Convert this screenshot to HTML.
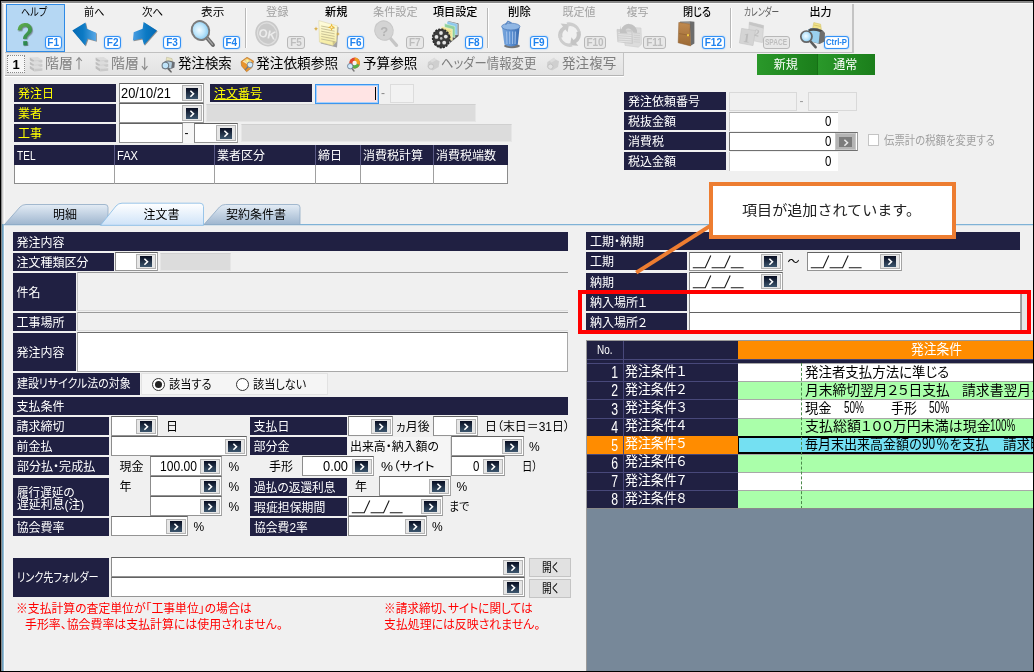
<!DOCTYPE html><html lang="ja"><head><meta charset="utf-8"><title>発注入力</title><style>
*{box-sizing:border-box;margin:0;padding:0}
html,body{width:1034px;height:672px;overflow:hidden;background:#f0f0f0}
#w{position:absolute;left:0;top:0;width:1034px;height:672px;overflow:hidden;will-change:transform;transform:translateZ(0)}
body{position:relative;font-family:"Liberation Sans","Noto Sans CJK JP",sans-serif;font-size:12px;color:#000;font-feature-settings:"palt" 1;line-height:1}
.a{position:absolute}
.lbl{position:absolute;background:#202042;color:#fff;height:18px;line-height:20px;padding-left:4px;white-space:nowrap;font-size:12px;overflow:hidden}
.lbl.y{color:#ffff00}
.inp{position:absolute;background:#fff;border:1px solid #a4a4a4;border-top-color:#626262;border-left-color:#8c8c8c;border-bottom-color:#949494;height:19px}
.dis{position:absolute;background:#dcdcdc;border:1px solid #e6e6e6;border-top-color:#d0d0d0}
.btn{position:absolute;width:20px;height:15px;background:#e6e6e6;border:1px solid #b4b4b4;top:1px}
.btn i{position:absolute;left:2.4px;top:1.2px;width:12.5px;height:10.7px;background:linear-gradient(#070c20,#3c566e)}
.btn svg{position:absolute;left:2.8px;top:2.1px}
.t{position:absolute;white-space:nowrap;line-height:14px}
.f{display:inline-block;white-space:pre;vertical-align:top}
.f>span{display:inline-block;transform-origin:0 0;white-space:pre}
.tb1{position:absolute;top:5.7px;font-size:11px;line-height:13px;white-space:nowrap}
.fk{position:absolute;top:36px;height:13px;border:1px solid #3391f5;border-radius:3px;background:#fff;color:#1e82ee;font-weight:bold;font-size:10px;line-height:11px;text-align:center;box-shadow:0 0 1.5px #6fb4ff,inset 0 0 1px #6fb4ff}
.fk.d{border-color:#b8b8b8;color:#bdbdbd;background:#e8e8e8;box-shadow:none}
.sep{position:absolute;top:8px;width:2px;height:40px;border-left:1px solid #b8b8b8;border-right:1px solid #fff}
.t2{position:absolute;top:55.5px;font-size:13.33px;line-height:16px;white-space:nowrap}
.gr{color:#7e7e7e}
.red{position:absolute;color:#ff0000;font-size:12px;line-height:14px;white-space:pre}
.g{font-size:13.33px;line-height:16px}
</style></head><body><div id="w"><div class="a" style="left:0;top:0;width:1034px;height:672px;border:1px solid #000;border-right-width:1.5px;border-bottom-width:1.5px;z-index:50"></div><div class="a" style="left:1px;top:1px;width:1px;height:670px;background:#8a8a8a"></div><div class="a" style="left:2px;top:224px;width:2px;height:447px;background:linear-gradient(90deg,#5d8fae,#a8cde2)"></div><div class="a" style="left:2px;top:2px;width:2px;height:222px;background:linear-gradient(90deg,#bcbcbc,#f4f4f4)"></div><div class="a" style="left:4px;top:2px;width:1px;height:669px;background:#fafafa"></div><div class="a" style="left:1px;top:1px;width:1032px;height:1.5px;background:#888"></div><div class="a" style="left:2px;top:2.5px;width:1031px;height:1px;background:#fafafa"></div><div class="a" style="left:5px;top:3.5px;width:849px;height:49px;border-right:2px solid #c4c4c4;border-bottom:1px solid #c0c0c0;background:#f0f0f0"></div><div class="a" style="left:5.5px;top:4px;width:59.5px;height:47.5px;background:#b5d7f3;border:1px solid #2e8ae6"></div><div class="tb1" style="left:20.9px;color:#000;"><span class="f" style="width:26.1px"><span style="transform:scaleX(0.8269)">ヘルプ</span></span></div><div class="tb1" style="left:83.8px;color:#000;"><span class="f" style="width:20.5px"><span style="transform:scaleX(0.9246)">前へ</span></span></div><div class="tb1" style="left:142.1px;color:#000;"><span class="f" style="width:21.2px"><span style="transform:scaleX(0.9562)">次へ</span></span></div><div class="tb1" style="left:200.5px;color:#000;"><span class="f" style="width:23.4px"><span style="transform:scaleX(1.0636)">表示</span></span></div><div class="tb1" style="left:265.9px;color:#a2a2a2;"><span class="f" style="width:22.4px"><span style="transform:scaleX(1.0182)">登録</span></span></div><div class="tb1" style="left:325px;color:#000;font-weight:500;"><span class="f" style="width:22.4px"><span style="transform:scaleX(1.0182)">新規</span></span></div><div class="tb1" style="left:372.8px;color:#a2a2a2;"><span class="f" style="width:44.5px"><span style="transform:scaleX(1.0114)">条件設定</span></span></div><div class="tb1" style="left:432.5px;color:#000;font-weight:500;"><span class="f" style="width:44.4px"><span style="transform:scaleX(1.0091)">項目設定</span></span></div><div class="tb1" style="left:507.5px;color:#000;font-weight:500;"><span class="f" style="width:22.8px"><span style="transform:scaleX(1.0364)">削除</span></span></div><div class="tb1" style="left:562.5px;color:#a2a2a2;"><span class="f" style="width:33px"><span style="transform:scaleX(1.0000)">既定値</span></span></div><div class="tb1" style="left:626.5px;color:#a2a2a2;"><span class="f" style="width:22px"><span style="transform:scaleX(1.0000)">複写</span></span></div><div class="tb1" style="left:682.5px;color:#000;font-weight:500;"><span class="f" style="width:28px"><span style="transform:scaleX(0.9185)">閉じる</span></span></div><div class="tb1" style="left:744.1px;color:#5c5c5c;"><span class="f" style="width:35.2px"><span style="transform:scaleX(0.6964)">カレンダー</span></span></div><div class="tb1" style="left:809.5px;color:#000;font-weight:500;"><span class="f" style="width:22px"><span style="transform:scaleX(1.0000)">出力</span></span></div><div class="fk" style="left:44.6px;width:17.2px;">F1</div><div class="fk" style="left:104px;width:17.4px;">F2</div><div class="fk" style="left:163px;width:18px;">F3</div><div class="fk" style="left:222.5px;width:17.5px;">F4</div><div class="fk d" style="left:287.3px;width:17.6px;">F5</div><div class="fk" style="left:346.9px;width:17.6px;">F6</div><div class="fk d" style="left:406px;width:17.5px;">F7</div><div class="fk" style="left:465px;width:17.6px;">F8</div><div class="fk" style="left:529.8px;width:18.1px;">F9</div><div class="fk d" style="left:583.6px;width:22.9px;">F10</div><div class="fk d" style="left:643px;width:23px;">F11</div><div class="fk" style="left:701.8px;width:23.2px;">F12</div><div class="fk d" style="left:762.5px;width:27.5px;font-size:8.5px;"><span class="f" style="width:22px"><span style="transform:scaleX(0.7677)">SPACE</span></span></div><div class="fk" style="left:823.5px;width:25.5px;font-size:8.5px;"><span class="f" style="width:21px"><span style="transform:scaleX(0.9075)">Ctrl-P</span></span></div><div class="sep" style="left:245px"></div><div class="sep" style="left:487px"></div><div class="sep" style="left:730px"></div><svg class="a" style="left:0;top:0;z-index:3" width="860" height="80" viewBox="0 0 860 80"><defs>
<linearGradient id="gq" x1="0" y1="0" x2="0.3" y2="1"><stop offset="0" stop-color="#74b84a"/><stop offset="1" stop-color="#1f8050"/></linearGradient>
<linearGradient id="ga1" x1="0" y1="0" x2="1" y2="0"><stop offset="0" stop-color="#0569b4"/><stop offset="0.45" stop-color="#0c7ac4"/><stop offset="1" stop-color="#5aa8e6"/></linearGradient>
<linearGradient id="ga2" x1="0" y1="0" x2="1" y2="0"><stop offset="0" stop-color="#4a9ee2"/><stop offset="0.55" stop-color="#0c7ac4"/><stop offset="1" stop-color="#0569b4"/></linearGradient>
<radialGradient id="glens" cx="0.45" cy="0.45" r="0.6"><stop offset="0" stop-color="#f2fbff"/><stop offset="0.5" stop-color="#bfe6fb"/><stop offset="1" stop-color="#7cc6f2"/></radialGradient>
<linearGradient id="gtr" x1="0" y1="0" x2="1" y2="0"><stop offset="0" stop-color="#7aa7dc"/><stop offset="0.5" stop-color="#5a8fd2"/><stop offset="1" stop-color="#3a6cb0"/></linearGradient>
<linearGradient id="gdoor" x1="0" y1="0" x2="0" y2="1"><stop offset="0" stop-color="#c08a50"/><stop offset="1" stop-color="#9c6a34"/></linearGradient>
<linearGradient id="gnote" x1="0" y1="0" x2="0" y2="1"><stop offset="0" stop-color="#fffde0"/><stop offset="1" stop-color="#f6eca0"/></linearGradient>
<filter id="sh" x="-20%" y="-20%" width="150%" height="150%"><feGaussianBlur stdDeviation="0.6"/></filter>
</defs><text x="16.8" y="46.3" font-family="Liberation Sans,sans-serif" font-weight="bold" font-size="32" fill="#4a4a4a" opacity="0.55" filter="url(#sh)" transform="translate(2.4 0) rotate(-4 25 35) scale(0.9 1)">?</text><text x="15.8" y="45.3" font-family="Liberation Sans,sans-serif" font-weight="bold" font-size="32" fill="url(#gq)" transform="translate(2.4 0) rotate(-4 25 35) scale(0.9 1)">?</text><path d="M73.3 31.3 L86.2 23.2 L87.6 29.6 L96.9 33.6 L96.9 41.8 L88.4 39.4 L85.9 46.4 Z" fill="#333" opacity="0.5" filter="url(#sh)"/><path d="M72.3 30.5 L85.4 22.4 L86.8 28.8 L96.1 32.8 L96.1 41 L87.6 38.6 L85.1 45.6 Z" fill="url(#ga1)"/><path d="M157.7 31.3 L144.4 22.8 L143.4 29.6 L134.5 33 L133.7 41.2 L143 39.4 L144.9 45.8 Z" fill="#333" opacity="0.5" filter="url(#sh)"/><path d="M156.9 30.5 L143.6 22 L142.6 28.8 L133.7 32.2 L132.9 40.4 L142.2 38.6 L144.1 45 Z" fill="url(#ga2)"/><line x1="207.5" y1="38.5" x2="213" y2="45" stroke="#6a6a6a" stroke-width="3.9" stroke-linecap="round"/><line x1="207.2" y1="38" x2="212.5" y2="44.3" stroke="#a8a8a8" stroke-width="1.2" stroke-linecap="round"/><ellipse cx="200.5" cy="30.5" rx="8.6" ry="9.6" fill="url(#glens)" stroke="#7c7c7c" stroke-width="2" transform="rotate(-25 200.6 30.6)"/><ellipse cx="267.2" cy="33.6" rx="11.8" ry="13" fill="#c9c9c9" transform="rotate(-20 267.2 33.6)"/><ellipse cx="267.2" cy="33.6" rx="9.6" ry="10.8" fill="none" stroke="#dedede" stroke-width="1.2" transform="rotate(-20 267.2 33.6)"/><text x="258.6" y="38" font-family="Liberation Sans,sans-serif" font-weight="bold" font-size="11.5" fill="#ececec" transform="rotate(12 267 34)">OK</text><path d="M320.2 22 L338.6 27.2 L337 47.4 L320.8 43.4 Z" fill="#444" opacity="0.45" filter="url(#sh)"/><path d="M318.8 20.6 L337.4 25.9 L336.4 41.5 L332.8 45.6 L319.4 42.1 Z" fill="url(#gnote)" stroke="#d6cfa0" stroke-width="0.5"/><path d="M336.4 41.5 L332.8 45.6 L332.6 41.2 Z" fill="#cfc58a"/><line x1="321.2" y1="26" x2="334.6" y2="28.6" stroke="#bdb58c" stroke-width="0.8"/><line x1="321.2" y1="28.6" x2="334.6" y2="31.2" stroke="#bdb58c" stroke-width="0.8"/><line x1="321.2" y1="31.2" x2="334.6" y2="33.8" stroke="#bdb58c" stroke-width="0.8"/><line x1="321.2" y1="33.8" x2="334.6" y2="36.4" stroke="#bdb58c" stroke-width="0.8"/><line x1="321.2" y1="36.4" x2="334.6" y2="39" stroke="#bdb58c" stroke-width="0.8"/><line x1="321.2" y1="39" x2="334.6" y2="41.6" stroke="#bdb58c" stroke-width="0.8"/><path d="M331.6 23.6 L332.608 26.192 L335.2 27.2 L332.608 28.208 L331.6 30.8 L330.592 28.208 L328 27.2 L330.592 26.192 Z" fill="#e8b028"/><path d="M331.6 25.6 L332.048 26.752 L333.2 27.2 L332.048 27.648 L331.6 28.8 L331.152 27.648 L330 27.2 L331.152 26.752 Z" fill="#fff4c0"/><path d="M316 26.6 L316.616 28.184 L318.2 28.8 L316.616 29.416 L316 31 L315.384 29.416 L313.8 28.8 L315.384 28.184 Z" fill="#d8a838"/><path d="M338 32 L338.56 33.44 L340 34 L338.56 34.56 L338 36 L337.44 34.56 L336 34 L337.44 33.44 Z" fill="#d8a838"/><line x1="390.5" y1="38.5" x2="396.5" y2="45.3" stroke="#c6c6c6" stroke-width="3.4" stroke-linecap="round"/><ellipse cx="384" cy="30.6" rx="9.2" ry="9.8" fill="#d4d4d4" stroke="#c8c8c8" stroke-width="1" transform="rotate(-25 384 30.6)"/><text x="380.2" y="35.6" font-family="Liberation Sans,sans-serif" font-weight="bold" font-size="13" fill="#b4b4b4">?</text><path d="M448 21 L458.5 23.5 L458.5 36 L450 43 Z" fill="#333" opacity="0.8"/><path d="M447 21.2 L457.4 24 L457.4 35 L447 32.4 Z" fill="#8cc8ee" stroke="#e8f4fc" stroke-width="0.5"/><path d="M444.6 23.6 L455 26.4 L455 37.6 L444.6 35 Z" fill="#8fd09c" stroke="#e4f6e6" stroke-width="0.5"/><path d="M441.6 26.4 L452.4 29.2 L452.4 40.6 L441.6 38 Z" fill="#f4e79a" stroke="#fbf6d8" stroke-width="0.5"/><line x1="443" y1="29.6" x2="451" y2="31.6" stroke="#d2c678" stroke-width="0.6"/><line x1="443" y1="32" x2="451" y2="34" stroke="#d2c678" stroke-width="0.6"/><line x1="443" y1="34.4" x2="451" y2="36.4" stroke="#d2c678" stroke-width="0.6"/><line x1="443" y1="36.8" x2="451" y2="38.8" stroke="#d2c678" stroke-width="0.6"/><ellipse cx="441.2" cy="38.4" rx="8.6" ry="9.4" fill="#3c3c3c" stroke="#2a2a2a" stroke-width="1.4" stroke-dasharray="2 1.2" transform="rotate(-15 441.2 38.4)"/><circle cx="445.8" cy="36.6" r="1.9" fill="#e4e4e4"/><circle cx="444.2" cy="42.7" r="1.9" fill="#e4e4e4"/><circle cx="438.5" cy="42.9" r="1.9" fill="#e4e4e4"/><circle cx="436.5" cy="36.9" r="1.9" fill="#e4e4e4"/><circle cx="441.0" cy="33.0" r="1.9" fill="#e4e4e4"/><circle cx="441.2" cy="38.4" r="1.3" fill="#c0c0c0"/><ellipse cx="512" cy="46" rx="8" ry="2.2" fill="#222" opacity="0.6" filter="url(#sh)"/><path d="M502 27 L504.4 44.6 Q511 48.4 517.8 44.6 L519.6 27 Z" fill="url(#gtr)"/><line x1="506.6" y1="31.5" x2="507" y2="44" stroke="#a9c7ee" stroke-width="1.1" opacity="0.85"/><line x1="509.6" y1="31.5" x2="509.75" y2="44" stroke="#a9c7ee" stroke-width="1.1" opacity="0.85"/><line x1="512.6" y1="31.5" x2="512.5" y2="44" stroke="#a9c7ee" stroke-width="1.1" opacity="0.85"/><line x1="515.4" y1="31.5" x2="515.05" y2="44" stroke="#a9c7ee" stroke-width="1.1" opacity="0.85"/><ellipse cx="510.8" cy="26.6" rx="9.2" ry="3.4" fill="#8fb6e4" stroke="#4a78b8" stroke-width="0.7"/><path d="M505.5 24.6 L508 21.4 L511.5 23.2" fill="none" stroke="#5a88c4" stroke-width="1.4"/><path d="M558.6 38 A11 11 0 0 1 563 26.4 L560.6 23.6 L569 24.2 L567.6 32.2 L565.4 29.4 A7 7 0 0 0 562.6 37.2 Z" fill="#c8c8c8"/><path d="M566.5 22.6 A11.5 11.5 0 0 1 580.6 35 L577 36.6 A7.4 7.4 0 0 0 568 26.4 Z" fill="#cdcdcd"/><path d="M580.4 31.2 A11 11 0 0 1 576 43 L578.4 45.8 L570 45.2 L571.4 37.2 L573.6 40 A7 7 0 0 0 576.4 32.2 Z" fill="#c4c4c4"/><path d="M572.5 46.6 A11.5 11.5 0 0 1 558.4 34.4 L562 32.8 A7.4 7.4 0 0 0 571 43 Z" fill="#cdcdcd"/><path d="M624 27 L641 28 L641.6 44 L638.5 47.2 L625 45.4 Z" fill="#dcdcdc" stroke="#cfcfcf" stroke-width="0.6"/><path d="M617 29.4 L632 30.4 L632.6 43.6 L617.8 41.8 Z" fill="#d0d0d0" stroke="#c4c4c4" stroke-width="0.6"/><line x1="618.4" y1="32.4" x2="631.4" y2="33.2" stroke="#e6e6e6" stroke-width="0.9"/><line x1="633.6" y1="33" x2="640" y2="33.4" stroke="#c8c8c8" stroke-width="0.7"/><line x1="618.4" y1="34.6" x2="631.4" y2="35.4" stroke="#e6e6e6" stroke-width="0.9"/><line x1="633.6" y1="35.2" x2="640" y2="35.6" stroke="#c8c8c8" stroke-width="0.7"/><line x1="618.4" y1="36.8" x2="631.4" y2="37.6" stroke="#e6e6e6" stroke-width="0.9"/><line x1="633.6" y1="37.4" x2="640" y2="37.8" stroke="#c8c8c8" stroke-width="0.7"/><line x1="618.4" y1="39" x2="631.4" y2="39.8" stroke="#e6e6e6" stroke-width="0.9"/><line x1="633.6" y1="39.6" x2="640" y2="40" stroke="#c8c8c8" stroke-width="0.7"/><line x1="618.4" y1="41.2" x2="631.4" y2="42" stroke="#e6e6e6" stroke-width="0.9"/><line x1="633.6" y1="41.8" x2="640" y2="42.2" stroke="#c8c8c8" stroke-width="0.7"/><path d="M621 30 A8.2 8.2 0 0 1 637 30.6 L637 33 L633.2 32.6 A4.6 4.6 0 0 0 625.4 30 L627.6 33.4 L619.8 33 L620.2 25.6 Z" fill="#c2c2c2"/><path d="M689.8 21.2 L694.4 21.8 L694.4 43.4 L690.6 45.8 Z" fill="#6c6c6c"/><path d="M680 21.6 L690 21.2 L690 24 L680 23 Z" fill="#8c8c8c"/><path d="M678.8 22.4 L689.8 24.1 L690.6 45.9 L678.2 42.8 Z" fill="url(#gdoor)" stroke="#8a5a2a" stroke-width="0.5"/><line x1="679" y1="33.6" x2="690" y2="35.4" stroke="#8c5c2c" stroke-width="0.6"/><rect x="687" y="34.2" width="2" height="2" fill="#f2cc40"/><path d="M749.4 22 L763.6 25.6 L762.4 42.6 L748 39.6 Z" fill="#dadada" stroke="#cacaca" stroke-width="0.6"/><path d="M749.4 22 L763.6 25.6 L763.3 28.4 L749.1 24.8 Z" fill="#c6c6c6"/><path d="M741.6 28.4 L755.4 30.6 L753 45.6 L739.4 43 Z" fill="#d4d4d4" stroke="#c4c4c4" stroke-width="0.6"/><text x="743.4" y="42.4" font-family="Liberation Serif,serif" font-weight="bold" font-size="13" fill="#bcbcbc" transform="rotate(8 747 38)">1</text><text x="754.4" y="36.4" font-family="Liberation Serif,serif" font-weight="bold" font-size="10" fill="#c0c0c0" transform="rotate(12 757 33)">2</text><path d="M813.8 22.6 L820.6 24.2 L821.4 30 L812.6 28.6 Z" fill="#f2e38a" stroke="#cdbb5c" stroke-width="0.5"/><line x1="814" y1="25" x2="820.4" y2="26.4" stroke="#c4b25a" stroke-width="0.6"/><path d="M808 29.4 Q814 26.4 822.8 30.4 L825 33 L824.6 41.4 L819.6 44 L809 41 Z" fill="#6e6e6e"/><path d="M808 29.6 Q813.4 27.2 820 30 L818.6 43.6 L809 41 Z" fill="#9ad0ee"/><path d="M808.6 29.4 Q814 26.8 822.6 30.6 L820 32 Q814 29.6 808.6 31.4 Z" fill="#4c4c4c"/><line x1="811" y1="42" x2="815.6" y2="47.2" stroke="#5c5c5c" stroke-width="2.6" stroke-linecap="round"/><circle cx="806.4" cy="36.6" r="5.6" fill="url(#glens)" stroke="#666" stroke-width="1.7"/></svg><div class="a" style="left:5px;top:53px;width:619px;height:23px;background:linear-gradient(#ededed,#e2e2e2);border-right:1px solid #c4c4c4;border-bottom:1px solid #b4b4b4"></div><div class="a" style="left:5px;top:76px;width:619px;height:1px;background:#fff"></div><div class="a" style="left:7px;top:55px;width:18px;height:18px;border:1px dotted #8a8a8a;background:#f6f6f6;font-weight:bold;font-size:13px;line-height:17px;text-align:center">1</div><div class="t2 gr" style="left:45.1px"><span class="f" style="width:27.9px"><span style="transform:scaleX(1.0467)">階層</span></span></div><div class="t2 gr" style="left:111.1px"><span class="f" style="width:27.9px"><span style="transform:scaleX(1.0467)">階層</span></span></div><div class="t2" style="left:178px"><span class="f" style="width:53.8px"><span style="transform:scaleX(1.0091)">発注検索</span></span></div><div class="t2" style="left:256.2px"><span class="f" style="width:82.2px"><span style="transform:scaleX(1.0279)">発注依頼参照</span></span></div><div class="t2" style="left:363.1px"><span class="f" style="width:54.3px"><span style="transform:scaleX(1.0185)">予算参照</span></span></div><div class="t2 gr" style="left:441px"><span class="f" style="width:95.3px"><span style="transform:scaleX(0.9286)">ヘッダー情報変更</span></span></div><div class="t2 gr" style="left:562px"><span class="f" style="width:54.3px"><span style="transform:scaleX(1.0185)">発注複写</span></span></div><svg class="a" style="left:0;top:52px;z-index:3" width="640" height="26" viewBox="0 52 640 26"><path d="M29.8 57.6 L37.8 57 L42.4 60 L34.4 60.6 Z" fill="#dcdcdc"/><path d="M29.8 57.6 L34.4 60.6 L34.4 63.2 L29.8 60.2 Z" fill="#bdbdbd"/><path d="M34.4 60.6 L42.4 60 L42.4 62.6 L34.4 63.2 Z" fill="#cacaca"/><path d="M29.8 61.7 L37.8 61.1 L42.4 64.1 L34.4 64.7 Z" fill="#dcdcdc"/><path d="M29.8 61.7 L34.4 64.7 L34.4 67.3 L29.8 64.3 Z" fill="#bdbdbd"/><path d="M34.4 64.7 L42.4 64.1 L42.4 66.7 L34.4 67.3 Z" fill="#cacaca"/><path d="M29.8 65.8 L37.8 65.2 L42.4 68.2 L34.4 68.8 Z" fill="#dcdcdc"/><path d="M29.8 65.8 L34.4 68.8 L34.4 71.4 L29.8 68.4 Z" fill="#bdbdbd"/><path d="M34.4 68.8 L42.4 68.2 L42.4 70.8 L34.4 71.4 Z" fill="#cacaca"/><path d="M95.6 57.6 L103.6 57 L108.2 60 L100.2 60.6 Z" fill="#dcdcdc"/><path d="M95.6 57.6 L100.2 60.6 L100.2 63.2 L95.6 60.2 Z" fill="#bdbdbd"/><path d="M100.2 60.6 L108.2 60 L108.2 62.6 L100.2 63.2 Z" fill="#cacaca"/><path d="M95.6 61.7 L103.6 61.1 L108.2 64.1 L100.2 64.7 Z" fill="#dcdcdc"/><path d="M95.6 61.7 L100.2 64.7 L100.2 67.3 L95.6 64.3 Z" fill="#bdbdbd"/><path d="M100.2 64.7 L108.2 64.1 L108.2 66.7 L100.2 67.3 Z" fill="#cacaca"/><path d="M95.6 65.8 L103.6 65.2 L108.2 68.2 L100.2 68.8 Z" fill="#dcdcdc"/><path d="M95.6 65.8 L100.2 68.8 L100.2 71.4 L95.6 68.4 Z" fill="#bdbdbd"/><path d="M100.2 68.8 L108.2 68.2 L108.2 70.8 L100.2 71.4 Z" fill="#cacaca"/><path d="M79 57.6 L79 69.6 M76.2 61 L79 57.6 L81.8 61" fill="none" stroke="#8c8c8c" stroke-width="1.1"/><path d="M144.7 57.6 L144.7 69.6 M141.9 66.2 L144.7 69.6 L147.5 66.2" fill="none" stroke="#8c8c8c" stroke-width="1.1"/><path d="M166.6 57.2 L172 58.6 L172.6 62.4 L166 61.4 Z" fill="#e8e4c0" stroke="#a8a480" stroke-width="0.4"/><path d="M164.4 61.4 Q169 59.4 174.8 62.2 L174.4 67.6 L169.8 69.4 L164.4 67.8 Z" fill="#6a6e74"/><path d="M165 62 Q168.4 60.8 172 62.4 L171.2 68.6 L165 67.2 Z" fill="#b4cfe0"/><line x1="168" y1="68.6" x2="171" y2="71.8" stroke="#666" stroke-width="1.6" stroke-linecap="round"/><circle cx="165.4" cy="65.6" r="3.3" fill="#bfe4fa" stroke="#6e7a86" stroke-width="1.1"/><path d="M241 61.6 L247 57.2 L253.6 61 L252 67.6 L246.6 71.8 L241.6 66 Z" fill="#e8942c" stroke="#a8641c" stroke-width="0.5"/><path d="M242.6 61.4 L247 58.4 L251.8 61.2 L247.6 64.4 Z" fill="#f6e8c0"/><path d="M246.4 60.2 l1 -1.8 l1 1.8 l1.8 0.6 l-1.8 0.8 l-1 1.8 l-1 -1.8 l-1.8 -0.8 Z" fill="#fff6a0" stroke="#d4a020" stroke-width="0.3"/><circle cx="250" cy="64.8" r="2.8" fill="#cfeafc" stroke="#7a8894" stroke-width="0.9"/><line x1="247.8" y1="67" x2="245.4" y2="69.6" stroke="#7a7a7a" stroke-width="1.3" stroke-linecap="round"/><circle cx="354.6" cy="63" r="5.4" fill="#e04830"/><path d="M354.6 63 L354.6 57.6 A5.4 5.4 0 0 1 359.6 65 Z" fill="#f0a020"/><path d="M354.6 63 L359.6 65 A5.4 5.4 0 0 1 351.6 67.5 Z" fill="#58b048"/><circle cx="354.6" cy="63" r="2.2" fill="#f4f4f4"/><line x1="351.6" y1="68" x2="354" y2="71" stroke="#777" stroke-width="1.4" stroke-linecap="round"/><circle cx="350.2" cy="66.2" r="2.7" fill="#cfeafc" stroke="#6e7f94" stroke-width="0.9"/><path d="M428 62 L434 58.4 L439.6 61.2 L438.6 67 L432.6 70.6 L427.4 67 Z" fill="#cfcfcf"/><path d="M430 60.4 L434.6 57.6 L436.4 60 L432 62.6 Z" fill="#dcdcdc"/><circle cx="431" cy="66.6" r="2.6" fill="#e2e2e2" stroke="#c0c0c0" stroke-width="0.9"/><path d="M547.4 62 L553.4 58.4 L559 61.2 L558 67 L552 70.6 L546.8 67 Z" fill="#cfcfcf"/><path d="M549.4 60.4 L554 57.6 L555.8 60 L551.4 62.6 Z" fill="#dcdcdc"/><circle cx="550.4" cy="66.6" r="2.6" fill="#e2e2e2" stroke="#c0c0c0" stroke-width="0.9"/></svg><div class="a" style="left:757px;top:53.7px;width:60px;height:21.6px;background:linear-gradient(90deg,#2a982a,#1b7e1b);color:#fff;text-align:center;padding-right:2.5px;line-height:22px;font-size:12px">新規</div><div class="a" style="left:816.5px;top:53.7px;width:58.5px;height:21.6px;background:linear-gradient(90deg,#2a982a,#1b7e1b);color:#fff;text-align:center;padding-right:2px;line-height:22px;font-size:12px;border-left:1px solid #167016">通常</div><div class="lbl y" style="left:14px;top:84px;width:102px;height:18px;">発注日</div><div class="lbl y" style="left:14px;top:104px;width:102px;height:18px;">業者</div><div class="lbl y" style="left:14px;top:124px;width:102px;height:18px;">工事</div><div class="inp" style="left:119px;top:83px;width:85px;height:20px;"><span class="t" style="left:1px;top:3px;"><span class="f" style="width:50px"><span style="transform:scale(1.0702,1.150);transform-origin:0 80%">20/10/21</span></span></span><span class="btn" style="right:0.6px;top:1px;height:16px"><i style="top:2px"></i><svg style="top:2.9px" width="12" height="9" viewBox="0 0 12 9"><path d="M4.4 1.7 L7.5 4.7 L4.4 7.7" fill="none" stroke="#fff" stroke-width="1.6"/></svg></span></div><div class="inp" style="left:119px;top:103px;width:85px;height:20px;"><span class="btn" style="right:0.6px;top:1px;height:16px"><i style="top:2px"></i><svg style="top:2.9px" width="12" height="9" viewBox="0 0 12 9"><path d="M4.4 1.7 L7.5 4.7 L4.4 7.7" fill="none" stroke="#fff" stroke-width="1.6"/></svg></span></div><div class="inp" style="left:119px;top:123px;width:63.5px;height:20px;"></div><div class="a" style="left:183px;top:124px;width:10.5px;height:19px;background:#f6f6f6"></div><div class="t" style="left:184.5px;top:126px;">-</div><div class="inp" style="left:193.5px;top:123px;width:44.5px;height:20px;"><span class="btn" style="right:0.6px;top:1px;height:16px"><i style="top:2px"></i><svg style="top:2.9px" width="12" height="9" viewBox="0 0 12 9"><path d="M4.4 1.7 L7.5 4.7 L4.4 7.7" fill="none" stroke="#fff" stroke-width="1.6"/></svg></span></div><div class="lbl y" style="left:210px;top:84px;width:102px;height:18px;"><span style="text-decoration:underline">注文番号</span></div><div class="a" style="left:315px;top:84px;width:63.5px;height:19.5px;background:#ffe4e4;border:1px solid #3c96f0;box-shadow:inset 0 0 0 1px #a8d0fa"></div><div class="a" style="left:374.5px;top:87px;width:1px;height:13px;background:#000"></div><div class="t" style="left:381px;top:86px;color:#888">-</div><div class="a" style="left:389.5px;top:84px;width:24px;height:18.5px;background:#f2f2f2;border:1px solid #dcdcdc"></div><div class="dis" style="left:206px;top:104px;width:270px;height:18px"></div><div class="dis" style="left:241px;top:124px;width:270.5px;height:18px"></div><div class="a" style="left:14px;top:145px;width:493.5px;height:19.5px;background:#202042"></div><div class="a" style="left:14px;top:164.5px;width:493.5px;height:19.5px;background:#fff;border:1px solid #8c8c8c;border-top:none"></div><div class="t" style="left:17px;top:149px;color:#fff"><span class="f" style="width:18.5px"><span style="transform:scaleX(0.8403)">TEL</span></span></div><div class="t" style="left:117px;top:149px;color:#fff"><span class="f" style="width:21px"><span style="transform:scaleX(0.9256)">FAX</span></span></div><div class="a" style="left:114px;top:145px;width:1px;height:19.5px;background:#5a5a86"></div><div class="a" style="left:114px;top:164.5px;width:1px;height:19px;background:#a0a0a0"></div><div class="t" style="left:217px;top:149px;color:#fff">業者区分</div><div class="a" style="left:214px;top:145px;width:1px;height:19.5px;background:#5a5a86"></div><div class="a" style="left:214px;top:164.5px;width:1px;height:19px;background:#a0a0a0"></div><div class="t" style="left:318px;top:149px;color:#fff">締日</div><div class="a" style="left:315px;top:145px;width:1px;height:19.5px;background:#5a5a86"></div><div class="a" style="left:315px;top:164.5px;width:1px;height:19px;background:#a0a0a0"></div><div class="t" style="left:363px;top:149px;color:#fff">消費税計算</div><div class="a" style="left:360px;top:145px;width:1px;height:19.5px;background:#5a5a86"></div><div class="a" style="left:360px;top:164.5px;width:1px;height:19px;background:#a0a0a0"></div><div class="t" style="left:436px;top:149px;color:#fff">消費税端数</div><div class="a" style="left:433px;top:145px;width:1px;height:19.5px;background:#5a5a86"></div><div class="a" style="left:433px;top:164.5px;width:1px;height:19px;background:#a0a0a0"></div><div class="lbl" style="left:624px;top:92px;width:101.5px;height:18px;">発注依頼番号</div><div class="lbl" style="left:624px;top:112px;width:101.5px;height:18px;">税抜金額</div><div class="lbl" style="left:624px;top:132px;width:101.5px;height:18px;">消費税</div><div class="lbl" style="left:624px;top:152px;width:101.5px;height:18px;">税込金額</div><div class="a" style="left:728.5px;top:92px;width:68px;height:18.5px;background:#f0f0f0;border:1px solid #d9d9d9"></div><div class="t" style="left:799.5px;top:94px;color:#999">-</div><div class="a" style="left:808px;top:92px;width:49px;height:18.5px;background:#f0f0f0;border:1px solid #d9d9d9"></div><div class="a" style="left:729px;top:112px;width:108.5px;height:18.5px;background:#fff;border-top:1px solid #b0b0b0;border-left:1px solid #c8c8c8"></div><div class="a" style="left:729px;top:152px;width:108.5px;height:18.5px;background:#fff;border-left:1px solid #c8c8c8"></div><div class="a" style="left:728.5px;top:131.5px;width:129px;height:19.5px;background:#fff;border:1px solid #707070;border-right-color:#a0a0a0"></div><div class="a" style="left:835px;top:133px;width:21px;height:16.5px;background:#b4b4b4;border:1px solid #c8c8c8"><span class="a" style="left:3px;top:3px;width:13px;height:9.5px;background:#7c7c7c"></span><span class="a" style="left:3.5px;top:3.2px"><svg width="12" height="9" viewBox="0 0 12 9"><path d="M4.4 1.7 L7.5 4.7 L4.4 7.7" fill="none" stroke="#e8e8e8" stroke-width="1.6"/></svg></span></div><div class="t" style="left:825.3px;top:115px;"><span class="f" style="width:6.4px"><span style="transform:scale(0.9570,1.150);transform-origin:0 80%">0</span></span></div><div class="t" style="left:825.3px;top:135px;"><span class="f" style="width:6.4px"><span style="transform:scale(0.9570,1.150);transform-origin:0 80%">0</span></span></div><div class="t" style="left:825.3px;top:155px;"><span class="f" style="width:6.4px"><span style="transform:scale(0.9570,1.150);transform-origin:0 80%">0</span></span></div><div class="a" style="left:867.5px;top:134px;width:11.5px;height:11.5px;background:#fff;border:1px solid #c4c4c4"></div><div class="t" style="left:883.5px;top:134px;font-size:12px;color:#a0a0a0"><span class="f" style="width:111px"><span style="transform:scaleX(0.8654)">伝票計の税額を変更する</span></span></div><svg class="a" style="left:0;top:198px" width="1034" height="30" viewBox="0 198 1034 30">
<defs>
<linearGradient id="tg1" x1="0" y1="0" x2="0" y2="1"><stop offset="0" stop-color="#e3ecf5"/><stop offset="1" stop-color="#9fb6cf"/></linearGradient>
<linearGradient id="tg2" x1="0" y1="0" x2="0" y2="1"><stop offset="0" stop-color="#ffffff"/><stop offset="1" stop-color="#cfe3f8"/></linearGradient>
</defs>
<line x1="4" y1="224.7" x2="1034" y2="224.7" stroke="#7fb2d6" stroke-width="1.2"/>
<path d="M4.5 224.5 L20 207 Q22.5 204.5 26 204.5 L105 204.5 Q108 204.5 108 207.5 L108 224.5 Z" fill="url(#tg1)" stroke="#8fa9c4" stroke-width="0.8"/>
<path d="M204 224.5 L219.5 207 Q222 204.5 225.5 204.5 L297 204.5 Q300 204.5 300 207.5 L300 224.5 Z" fill="url(#tg1)" stroke="#8fa9c4" stroke-width="0.8"/>
<path d="M100.5 225.3 L116 206 Q118.5 203.2 122 203.2 L200 203.2 Q203.5 203.2 203.5 206.5 L203.5 225.3 Z" fill="url(#tg2)" stroke="#8fc0e6" stroke-width="0.9"/>
</svg><div class="t" style="left:53px;top:208px;">明細</div><div class="t" style="left:143.5px;top:207.5px;">注文書</div><div class="t" style="left:226px;top:208px;">契約条件書</div><div class="lbl" style="left:12.5px;top:232px;width:555.5px;height:18.5px;line-height:22px">発注内容</div><div class="lbl" style="left:12.5px;top:252.5px;width:101px;height:18px;">注文種類区分</div><div class="inp" style="left:115px;top:252px;width:43px;height:19px;"><span class="btn" style="right:0.6px;top:1px"><i></i><svg width="12" height="9" viewBox="0 0 12 9"><path d="M4.4 1.7 L7.5 4.7 L4.4 7.7" fill="none" stroke="#fff" stroke-width="1.6"/></svg></span></div><div class="dis" style="left:160px;top:253px;width:71px;height:17.5px"></div><div class="lbl" style="left:12.5px;top:273px;width:63px;height:38px;line-height:40px">件名</div><div class="a" style="left:76.5px;top:272px;width:491.5px;height:39px;background:#f0f0f0;border-top:1px solid #9a9a9a;border-left:1px solid #c4c4c4;border-bottom:1px solid #dcdcdc"></div><div class="lbl" style="left:12.5px;top:312.5px;width:63px;height:18px;">工事場所</div><div class="a" style="left:76.5px;top:312px;width:491.5px;height:19px;background:#f0f0f0;border-top:1px solid #9a9a9a;border-left:1px solid #c4c4c4;border-bottom:1px solid #dcdcdc"></div><div class="lbl" style="left:12.5px;top:332.5px;width:63px;height:38px;line-height:40px">発注内容</div><div class="a" style="left:76.5px;top:332px;width:491.5px;height:39.5px;background:#fff;border:1px solid #a8a8a8;border-top-color:#6e6e6e"></div><div class="lbl" style="left:12.5px;top:373px;width:127.5px;height:21.5px;line-height:23px"><span class="f" style="width:113.7px"><span style="transform:scaleX(0.9118)">建設リサイクル法の対象</span></span></div><div class="a" style="left:141px;top:373px;width:187px;height:21.5px;background:#f5f5f5;border:1px solid #e2e2e2"></div><div class="a" style="left:151.5px;top:378px;width:13px;height:13px;border-radius:50%;border:1px solid #333;background:#fff"></div><div class="a" style="left:154.5px;top:381px;width:7px;height:7px;border-radius:50%;background:#222"></div><div class="t" style="left:168.5px;top:378px;font-size:12px;"><span class="f" style="width:42.7px"><span style="transform:scaleX(0.9359)">該当する</span></span></div><div class="a" style="left:236px;top:378px;width:13px;height:13px;border-radius:50%;border:1px solid #333;background:#fff"></div><div class="t" style="left:252.9px;top:378px;font-size:12px;"><span class="f" style="width:53.2px"><span style="transform:scaleX(0.9290)">該当しない</span></span></div><div class="lbl" style="left:12.5px;top:397px;width:555.5px;height:17.5px;line-height:21px">支払条件</div><div class="lbl" style="left:12.5px;top:417px;width:96.5px;height:18px;">請求締切</div><div class="lbl" style="left:12.5px;top:437px;width:96.5px;height:18px;">前金払</div><div class="lbl" style="left:12.5px;top:457px;width:96.5px;height:18px;"><span class="f" style="width:78.2px"><span style="transform:scaleX(1.0024)">部分払・完成払</span></span></div><div class="lbl" style="left:12.5px;top:477.5px;width:96.5px;height:38px;line-height:12px;padding-top:9px"><span class="f" style="width:57.6px"><span style="transform:scaleX(0.9668)">履行遅延の</span></span><br><span class="f" style="width:67.2px"><span style="transform:scaleX(0.9882)">遅延利息(注)</span></span></div><div class="lbl" style="left:12.5px;top:517.5px;width:96.5px;height:18px;">協会費率</div><div class="inp" style="left:111px;top:416px;width:47px;height:20px;"><span class="btn" style="right:0.6px;top:2px"><i></i><svg width="12" height="9" viewBox="0 0 12 9"><path d="M4.4 1.7 L7.5 4.7 L4.4 7.7" fill="none" stroke="#fff" stroke-width="1.6"/></svg></span></div><div class="t" style="left:166px;top:420px;">日</div><div class="inp" style="left:111px;top:436px;width:135.5px;height:20px;"><span class="btn" style="right:0.6px;top:2px"><i></i><svg width="12" height="9" viewBox="0 0 12 9"><path d="M4.4 1.7 L7.5 4.7 L4.4 7.7" fill="none" stroke="#fff" stroke-width="1.6"/></svg></span></div><div class="t" style="left:119.5px;top:460px;">現金</div><div class="inp" style="left:150px;top:456px;width:72px;height:20px;"><span class="t" style="right:24.5px;top:3px;"><span class="f" style="width:37px"><span style="transform:scale(1.0081,1.150);transform-origin:0 80%">100.00</span></span></span><span class="btn" style="right:0.6px;top:2px"><i></i><svg width="12" height="9" viewBox="0 0 12 9"><path d="M4.4 1.7 L7.5 4.7 L4.4 7.7" fill="none" stroke="#fff" stroke-width="1.6"/></svg></span></div><div class="t" style="left:228.5px;top:460px;">%</div><div class="t" style="left:119.5px;top:480px;">年</div><div class="inp" style="left:150px;top:476px;width:72px;height:20px;"><span class="btn" style="right:0.6px;top:2px"><i></i><svg width="12" height="9" viewBox="0 0 12 9"><path d="M4.4 1.7 L7.5 4.7 L4.4 7.7" fill="none" stroke="#fff" stroke-width="1.6"/></svg></span></div><div class="t" style="left:228.5px;top:480px;">%</div><div class="inp" style="left:150px;top:496px;width:72px;height:20px;"><span class="btn" style="right:0.6px;top:2px"><i></i><svg width="12" height="9" viewBox="0 0 12 9"><path d="M4.4 1.7 L7.5 4.7 L4.4 7.7" fill="none" stroke="#fff" stroke-width="1.6"/></svg></span></div><div class="t" style="left:228.5px;top:500px;">%</div><div class="inp" style="left:111px;top:516px;width:77px;height:20px;"><span class="btn" style="right:0.6px;top:2px"><i></i><svg width="12" height="9" viewBox="0 0 12 9"><path d="M4.4 1.7 L7.5 4.7 L4.4 7.7" fill="none" stroke="#fff" stroke-width="1.6"/></svg></span></div><div class="t" style="left:193.5px;top:520px;">%</div><div class="lbl" style="left:249.5px;top:417px;width:97px;height:18px;">支払日</div><div class="lbl" style="left:249.5px;top:437px;width:97px;height:18px;">部分金</div><div class="lbl" style="left:249.5px;top:477.5px;width:97px;height:18px;"><span class="f" style="width:81.5px"><span style="transform:scaleX(0.9751)">過払の返還利息</span></span></div><div class="lbl" style="left:249.5px;top:497.5px;width:97px;height:18px;"><span class="f" style="width:71.4px"><span style="transform:scaleX(0.9915)">瑕疵担保期間</span></span></div><div class="lbl" style="left:249.5px;top:517.5px;width:97px;height:18px;"><span class="f" style="width:53.8px"><span style="transform:scaleX(0.9838)">協会費2率</span></span></div><div class="inp" style="left:348px;top:416px;width:45px;height:20px;"><span class="btn" style="right:0.6px;top:2px"><i></i><svg width="12" height="9" viewBox="0 0 12 9"><path d="M4.4 1.7 L7.5 4.7 L4.4 7.7" fill="none" stroke="#fff" stroke-width="1.6"/></svg></span></div><div class="t" style="left:395.9px;top:420px;font-size:12px;"><span class="f" style="width:33.6px"><span style="transform:scaleX(0.9951)">ヵ月後</span></span></div><div class="inp" style="left:433px;top:416px;width:45px;height:20px;"><span class="btn" style="right:0.6px;top:2px"><i></i><svg width="12" height="9" viewBox="0 0 12 9"><path d="M4.4 1.7 L7.5 4.7 L4.4 7.7" fill="none" stroke="#fff" stroke-width="1.6"/></svg></span></div><div class="t" style="left:484.9px;top:420px;font-size:12px;"><span class="f" style="width:84.8px"><span style="transform:scaleX(0.9934)">日（末日＝31日）</span></span></div><div class="a" style="left:347px;top:436.5px;width:103.5px;height:40px;background:#f5f5f5;border-right:1px solid #dcdcdc"></div><div class="t" style="left:350.1px;top:440px;font-size:12px;"><span class="f" style="width:89px"><span style="transform:scaleX(0.9935)">出来高・納入額の</span></span></div><div class="inp" style="left:450.5px;top:436px;width:73px;height:20px;"><span class="btn" style="right:0.6px;top:2px"><i></i><svg width="12" height="9" viewBox="0 0 12 9"><path d="M4.4 1.7 L7.5 4.7 L4.4 7.7" fill="none" stroke="#fff" stroke-width="1.6"/></svg></span></div><div class="t" style="left:529px;top:440px;">%</div><div class="t" style="left:269px;top:460px;">手形</div><div class="inp" style="left:301.5px;top:456px;width:72px;height:20px;"><span class="t" style="right:24.5px;top:3px;"><span class="f" style="width:25px"><span style="transform:scale(1.0702,1.150);transform-origin:0 80%">0.00</span></span></span><span class="btn" style="right:0.6px;top:2px"><i></i><svg width="12" height="9" viewBox="0 0 12 9"><path d="M4.4 1.7 L7.5 4.7 L4.4 7.7" fill="none" stroke="#fff" stroke-width="1.6"/></svg></span></div><div class="t" style="left:381.1px;top:460px;font-size:12px;"><span class="f" style="width:53.8px"><span style="transform:scaleX(1.1252)">%（サイト</span></span></div><div class="inp" style="left:450.5px;top:456px;width:54.5px;height:20px;"><span class="t" style="right:24.5px;top:3px;"><span class="f" style="width:6.4px"><span style="transform:scale(0.9570,1.150);transform-origin:0 80%">0</span></span></span><span class="btn" style="right:0.6px;top:2px"><i></i><svg width="12" height="9" viewBox="0 0 12 9"><path d="M4.4 1.7 L7.5 4.7 L4.4 7.7" fill="none" stroke="#fff" stroke-width="1.6"/></svg></span></div><div class="t" style="left:522.2px;top:460px;font-size:12px;"><span class="f" style="width:15.5px"><span style="transform:scaleX(0.8604)">日）</span></span></div><div class="t" style="left:355px;top:480px;">年</div><div class="inp" style="left:378.5px;top:476px;width:72px;height:20px;"><span class="btn" style="right:0.6px;top:2px"><i></i><svg width="12" height="9" viewBox="0 0 12 9"><path d="M4.4 1.7 L7.5 4.7 L4.4 7.7" fill="none" stroke="#fff" stroke-width="1.6"/></svg></span></div><div class="t" style="left:456.5px;top:480px;">%</div><div class="inp" style="left:348px;top:496px;width:94.5px;height:20px;"><span class="t" style="left:1px;top:3px;"><svg style="position:absolute;left:0;top:-2px" width="58" height="18" viewBox="0 0 58 18"><path d="M1.8 14.8 H14.2 L19.8 2.6 M20.6 14.8 H33.6 L39.2 2.6 M39.8 14.8 H52.6" fill="none" stroke="#1a1a1a" stroke-width="1.1"/></svg></span><span class="btn" style="right:0.6px;top:2px"><i></i><svg width="12" height="9" viewBox="0 0 12 9"><path d="M4.4 1.7 L7.5 4.7 L4.4 7.7" fill="none" stroke="#fff" stroke-width="1.6"/></svg></span></div><div class="t" style="left:449px;top:500px;font-size:12px;"><span class="f" style="width:20.3px"><span style="transform:scaleX(0.9162)">まで</span></span></div><div class="inp" style="left:348px;top:516px;width:79px;height:20px;"><span class="btn" style="right:0.6px;top:2px"><i></i><svg width="12" height="9" viewBox="0 0 12 9"><path d="M4.4 1.7 L7.5 4.7 L4.4 7.7" fill="none" stroke="#fff" stroke-width="1.6"/></svg></span></div><div class="t" style="left:432px;top:520px;">%</div><div class="lbl" style="left:12.5px;top:558px;width:96.5px;height:38.5px;line-height:40px"><span class="f" style="width:81.5px"><span style="transform:scaleX(0.8429)">リンク先フォルダー</span></span></div><div class="inp" style="left:111px;top:557px;width:414px;height:20px;"><span class="btn" style="right:0.6px;top:2px"><i></i><svg width="12" height="9" viewBox="0 0 12 9"><path d="M4.4 1.7 L7.5 4.7 L4.4 7.7" fill="none" stroke="#fff" stroke-width="1.6"/></svg></span></div><div class="inp" style="left:111px;top:577px;width:414px;height:20px;"><span class="btn" style="right:0.6px;top:2px"><i></i><svg width="12" height="9" viewBox="0 0 12 9"><path d="M4.4 1.7 L7.5 4.7 L4.4 7.7" fill="none" stroke="#fff" stroke-width="1.6"/></svg></span></div><div class="a" style="left:529px;top:558px;width:42px;height:19px;background:#e1e1e1;border:1px solid #c4c4c4;text-align:center;line-height:18px"><span class="f" style="width:16.5px"><span style="transform:scaleX(0.8148)">開く</span></span></div><div class="a" style="left:529px;top:578.5px;width:42px;height:19px;background:#e1e1e1;border:1px solid #c4c4c4;text-align:center;line-height:18px"><span class="f" style="width:16.5px"><span style="transform:scaleX(0.8148)">開く</span></span></div><div class="red" style="left:16.3px;top:602px"><span class="f" style="width:235.6px"><span style="transform:scaleX(0.9862)">※支払計算の査定単位が「工事単位」の場合は</span></span></div><div class="red" style="left:24.7px;top:617.5px"><span class="f" style="width:257.8px"><span style="transform:scaleX(0.9926)">手形率、協会費率は支払計算には使用されません。</span></span></div><div class="red" style="left:384.3px;top:602px"><span class="f" style="width:148.6px"><span style="transform:scaleX(0.9696)">※請求締切、サイトに関しては</span></span></div><div class="red" style="left:384.3px;top:617.5px"><span class="f" style="width:156.2px"><span style="transform:scaleX(0.9903)">支払処理には反映されません。</span></span></div><div class="lbl" style="left:586px;top:232px;width:434px;height:18px;line-height:21px">工期・納期</div><div class="lbl" style="left:586px;top:252px;width:101px;height:18px;">工期</div><div class="lbl" style="left:586px;top:273px;width:101px;height:18px;">納期</div><div class="lbl" style="left:586px;top:293px;width:101px;height:18px;">納入場所１</div><div class="lbl" style="left:586px;top:313px;width:101px;height:17px;">納入場所２</div><div class="inp" style="left:688.5px;top:252px;width:94px;height:19px;"><span class="t" style="left:1px;top:2px;"><svg style="position:absolute;left:0;top:-2px" width="58" height="18" viewBox="0 0 58 18"><path d="M1.8 14.8 H14.2 L19.8 2.6 M20.6 14.8 H33.6 L39.2 2.6 M39.8 14.8 H52.6" fill="none" stroke="#1a1a1a" stroke-width="1.1"/></svg></span><span class="btn" style="right:0.6px;top:1px"><i></i><svg width="12" height="9" viewBox="0 0 12 9"><path d="M4.4 1.7 L7.5 4.7 L4.4 7.7" fill="none" stroke="#fff" stroke-width="1.6"/></svg></span></div><div class="t" style="left:787.5px;top:254.5px;">～</div><div class="inp" style="left:807px;top:252px;width:95px;height:19px;"><span class="t" style="left:1px;top:2px;"><svg style="position:absolute;left:0;top:-2px" width="58" height="18" viewBox="0 0 58 18"><path d="M1.8 14.8 H14.2 L19.8 2.6 M20.6 14.8 H33.6 L39.2 2.6 M39.8 14.8 H52.6" fill="none" stroke="#1a1a1a" stroke-width="1.1"/></svg></span><span class="btn" style="right:0.6px;top:1px"><i></i><svg width="12" height="9" viewBox="0 0 12 9"><path d="M4.4 1.7 L7.5 4.7 L4.4 7.7" fill="none" stroke="#fff" stroke-width="1.6"/></svg></span></div><div class="inp" style="left:688.5px;top:272px;width:94px;height:19px;"><span class="t" style="left:1px;top:2px;"><svg style="position:absolute;left:0;top:-2px" width="58" height="18" viewBox="0 0 58 18"><path d="M1.8 14.8 H14.2 L19.8 2.6 M20.6 14.8 H33.6 L39.2 2.6 M39.8 14.8 H52.6" fill="none" stroke="#1a1a1a" stroke-width="1.1"/></svg></span><span class="btn" style="right:0.6px;top:1px"><i></i><svg width="12" height="9" viewBox="0 0 12 9"><path d="M4.4 1.7 L7.5 4.7 L4.4 7.7" fill="none" stroke="#fff" stroke-width="1.6"/></svg></span></div><div class="inp" style="left:688.5px;top:292.5px;width:332.5px;height:20px;"></div><div class="inp" style="left:688.5px;top:311.5px;width:332.5px;height:19px;"></div><div class="a" style="left:586px;top:340px;width:448px;height:331px;background:#778899;border-left:1px solid #9a9a9a;border-top:1px solid #9a9a9a"></div><div class="a" style="left:587px;top:341px;width:151.5px;height:22.5px;background:#202042"></div><div class="a g" style="left:738px;top:341px;width:296px;height:18.5px;background:#ff8c00;color:#fff"><span style="position:absolute;left:172.7px;top:0.5px"><span class="f" style="width:51px"><span style="transform:scaleX(0.9566)">発注条件</span></span></span></div><div class="a" style="left:738px;top:359px;width:296px;height:4px;background:#202042;border-top:1px solid #48487a"></div><div class="a" style="left:587px;top:359px;width:151.5px;height:1px;background:#48487a"></div><div class="t" style="left:597px;top:343px;color:#fff;font-size:13px"><span class="f" style="width:15.5px"><span style="transform:scaleX(0.7660)">No.</span></span></div><div class="a" style="left:587px;top:363px;width:151.5px;height:18.18px;background:#202042;border-top:1px solid #48487a"></div><div class="t g" style="left:587px;top:367.2px;width:31px;text-align:right;color:#fff;transform:scale(0.92,1.18);transform-origin:100% 100%">1</div><div class="t g" style="left:625.3px;top:363.5px;color:#fff"><span class="f" style="width:64.5px"><span style="transform:scaleX(0.9679)">発注条件１</span></span></div><div class="a" style="left:738px;top:363px;width:296px;height:18.18px;background:#fff;border-top:1px solid #a8a8a8;"></div><div class="t g" style="left:804.6px;top:364.5px"><span class="f" style="width:144.3px"><span style="transform:scaleX(1.0087)">発注者支払方法に準じる</span></span></div><div class="a" style="left:587px;top:381.18px;width:151.5px;height:18.18px;background:#202042;border-top:1px solid #48487a"></div><div class="t g" style="left:587px;top:385.38px;width:31px;text-align:right;color:#fff;transform:scale(0.92,1.18);transform-origin:100% 100%">2</div><div class="t g" style="left:625.3px;top:381.68px;color:#fff"><span class="f" style="width:64.5px"><span style="transform:scaleX(0.9679)">発注条件２</span></span></div><div class="a" style="left:738px;top:381.18px;width:296px;height:18.18px;background:#aaffaa;border-top:1px solid #a8a8a8;"></div><div class="t g" style="left:804.6px;top:382.68px"><span class="f" style="width:144.9px"><span style="transform:scaleX(1.0334)">月末締切翌月２５日支払</span></span></div><div class="t g" style="left:961.8px;top:382.68px"><span class="f" style="width:79.7px"><span style="transform:scaleX(1.0380)">請求書翌月４</span></span></div><div class="a" style="left:587px;top:399.36px;width:151.5px;height:18.18px;background:#202042;border-top:1px solid #48487a"></div><div class="t g" style="left:587px;top:403.56px;width:31px;text-align:right;color:#fff;transform:scale(0.92,1.18);transform-origin:100% 100%">3</div><div class="t g" style="left:625.3px;top:399.86px;color:#fff"><span class="f" style="width:64.5px"><span style="transform:scaleX(0.9679)">発注条件３</span></span></div><div class="a" style="left:738px;top:399.36px;width:296px;height:18.18px;background:#fff;border-top:1px solid #a8a8a8;"></div><div class="t g" style="left:804.6px;top:400.86px"><span class="f" style="width:26.6px"><span style="transform:scaleX(0.9979)">現金</span></span></div><div class="t g" style="left:844.1px;top:400.86px"><span class="f" style="width:20px"><span style="transform:scale(0.7494,1.250);transform-origin:0 80%">50%</span></span></div><div class="t g" style="left:890.5px;top:400.86px"><span class="f" style="width:25.9px"><span style="transform:scaleX(0.9716)">手形</span></span></div><div class="t g" style="left:929.3px;top:400.86px"><span class="f" style="width:20.2px"><span style="transform:scale(0.7569,1.250);transform-origin:0 80%">50%</span></span></div><div class="a" style="left:587px;top:417.54px;width:151.5px;height:18.18px;background:#202042;border-top:1px solid #48487a"></div><div class="t g" style="left:587px;top:421.74px;width:31px;text-align:right;color:#fff;transform:scale(0.92,1.18);transform-origin:100% 100%">4</div><div class="t g" style="left:625.3px;top:418.04px;color:#fff"><span class="f" style="width:64.5px"><span style="transform:scaleX(0.9679)">発注条件４</span></span></div><div class="a" style="left:738px;top:417.54px;width:296px;height:18.18px;background:#aaffaa;border-top:1px solid #a8a8a8;"></div><div class="t g" style="left:804.6px;top:419.04px"><span class="f" style="width:185.7px"><span style="transform:scaleX(1.0492)">支払総額１００万円未満は現金</span></span></div><div class="t g" style="left:989.8px;top:419.04px"><span class="f" style="width:25.2px"><span style="transform:scale(0.7391,1.250);transform-origin:0 80%">100%</span></span></div><div class="a" style="left:587px;top:435.72px;width:151.5px;height:18.18px;background:#ff8c00;border-top:1px solid #ff8c00"></div><div class="t g" style="left:587px;top:439.92px;width:31px;text-align:right;color:#fff;transform:scale(0.92,1.18);transform-origin:100% 100%">5</div><div class="t g" style="left:625.3px;top:436.22px;color:#fff"><span class="f" style="width:64.5px"><span style="transform:scaleX(0.9679)">発注条件５</span></span></div><div class="a" style="left:738px;top:435.72px;width:296px;height:18.18px;background:#74e0f2;border-top:1px solid #a8a8a8;border:2px solid #000;border-left-width:1.5px;border-right:none;"></div><div class="t g" style="left:804.6px;top:437.22px"><span class="f" style="width:116.7px"><span style="transform:scaleX(0.9767)">毎月末出来高金額の</span></span></div><div class="t g" style="left:922.3px;top:437.22px"><span class="f" style="width:13.2px"><span style="transform:scale(0.8902,1.250);transform-origin:0 80%">90</span></span></div><div class="t g" style="left:935.8px;top:437.22px"><span class="f" style="width:53px"><span style="transform:scaleX(1.0134)">％を支払</span></span></div><div class="t g" style="left:1002.5px;top:437.22px"><span class="f" style="width:54px"><span style="transform:scaleX(1.0222)">請求時に</span></span></div><div class="a" style="left:587px;top:453.9px;width:151.5px;height:18.18px;background:#202042;border-top:1px solid #48487a"></div><div class="t g" style="left:587px;top:458.1px;width:31px;text-align:right;color:#fff;transform:scale(0.92,1.18);transform-origin:100% 100%">6</div><div class="t g" style="left:625.3px;top:454.4px;color:#fff"><span class="f" style="width:64.5px"><span style="transform:scaleX(0.9679)">発注条件６</span></span></div><div class="a" style="left:738px;top:453.9px;width:296px;height:18.18px;background:#aaffaa;border-top:1px solid #a8a8a8;"></div><div class="a" style="left:587px;top:472.08px;width:151.5px;height:18.18px;background:#202042;border-top:1px solid #48487a"></div><div class="t g" style="left:587px;top:476.28px;width:31px;text-align:right;color:#fff;transform:scale(0.92,1.18);transform-origin:100% 100%">7</div><div class="t g" style="left:625.3px;top:472.58px;color:#fff"><span class="f" style="width:64.5px"><span style="transform:scaleX(0.9679)">発注条件７</span></span></div><div class="a" style="left:738px;top:472.08px;width:296px;height:18.18px;background:#fff;border-top:1px solid #a8a8a8;"></div><div class="a" style="left:587px;top:490.26px;width:151.5px;height:18.18px;background:#202042;border-top:1px solid #48487a"></div><div class="t g" style="left:587px;top:494.46px;width:31px;text-align:right;color:#fff;transform:scale(0.92,1.18);transform-origin:100% 100%">8</div><div class="t g" style="left:625.3px;top:490.76px;color:#fff"><span class="f" style="width:64.5px"><span style="transform:scaleX(0.9679)">発注条件８</span></span></div><div class="a" style="left:738px;top:490.26px;width:296px;height:18.18px;background:#aaffaa;border-top:1px solid #a8a8a8;"></div><div class="a" style="left:622.5px;top:341px;width:1px;height:168px;background:#48487a"></div><div class="a" style="left:800.8px;top:363px;width:0;height:145.5px;border-left:1px dashed #4c8a4c"></div><div class="a" style="left:587px;top:508.4px;width:447px;height:1px;background:#8a8a8a"></div><div class="a" style="left:1020.5px;top:293px;width:6.5px;height:37px;background:#e6e6e6;border-left:1px solid #9a9a9a"></div><div class="a" style="left:578px;top:290px;width:453px;height:44px;border:4px solid #ff0000;z-index:5"></div><svg class="a" style="left:600px;top:170px;z-index:6" width="400" height="120"><line x1="36.2" y1="102.6" x2="110.6" y2="55.6" stroke="#ed7d31" stroke-width="4"/></svg><div class="a" style="left:709px;top:182px;width:247px;height:57px;border:4px solid #ed7d31;background:#fff;z-index:7;font-size:14px;line-height:16px;font-feature-settings:normal;color:#222"><span style="position:absolute;left:29px;top:15.5px"><span class="f" style="width:179px"><span style="transform:scaleX(1.0771)">項目が追加されています。</span></span></span></div></div></body></html>
